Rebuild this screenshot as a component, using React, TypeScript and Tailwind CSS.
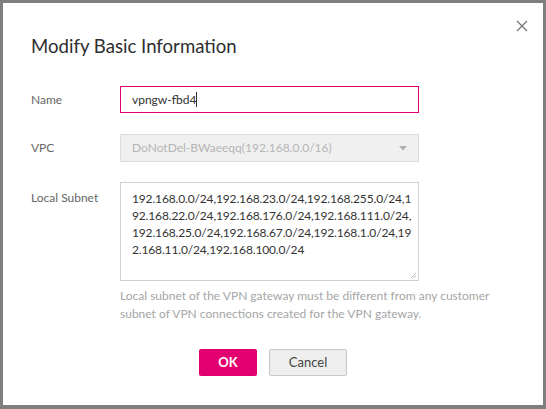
import React from "react";

export default function App() {
  return (
    <div className="w-[546px] h-[409px] bg-[#7f7f7f] pt-[3px] px-[3px] pb-[4px] font-['Lato',sans-serif]">
      <div className="relative h-full bg-white">
        <button className="absolute left-[513px] top-[17px] w-[12px] h-[12px] p-0">
          <svg width="12" height="12" viewBox="0 0 12 12">
            <path d="M1 1 L11 11 M11 1 L1 11" stroke="#777" strokeWidth="1.3" fill="none" />
          </svg>
        </button>
        <div className="pl-[28px]">
          <h2 className="pt-[31px] text-[18.6px] leading-[24px] text-[#2e2e2e]">Modify Basic Information</h2>
          <div className="mt-[28px] flex items-center h-[27px]">
            <div className="w-[89px] text-[12px] text-[#666]">Name</div>
            <div className="w-[299px] h-[27px] border border-[#e3006f] flex items-center pl-[11px] text-[12px] text-[#333]">
              vpngw-fbd4<span className="inline-block w-px h-[15px] bg-[#333]" />
            </div>
          </div>
          <div className="mt-[21px] flex items-center h-[28px]">
            <div className="w-[89px] text-[12px] text-[#666]">VPC</div>
            <div className="w-[299px] h-[28px] border border-[#dcdcdc] bg-[#f0f0f0] flex items-center justify-between pl-[11px] pr-[11px] text-[12px] text-[#b5b5b5]">
              <span>DoNotDel-BWaeeqq(192.168.0.0/16)</span>
              <svg width="8" height="5" viewBox="0 0 8 5">
                <path d="M0 0 L8 0 L4 4.5 Z" fill="#b0b0b0" />
              </svg>
            </div>
          </div>
          <div className="mt-[20px] flex items-start">
            <div className="w-[89px] pt-[7px] text-[12px] leading-[17px] text-[#666]">Local Subnet</div>
            <div className="relative w-[299px] h-[99px] border border-[#d0d0d0] pl-[11px] pt-[7px] text-[12px] leading-[17px] tracking-[-0.15px] text-[#333] whitespace-pre">
              <div>192.168.0.0/24,192.168.23.0/24,192.168.255.0/24,1</div>
              <div>92.168.22.0/24,192.168.176.0/24,192.168.111.0/24,</div>
              <div>192.168.25.0/24,192.168.67.0/24,192.168.1.0/24,19</div>
              <div>2.168.11.0/24,192.168.100.0/24</div>
              <svg className="absolute right-[2px] bottom-[2px]" width="6" height="6" viewBox="0 0 6 6">
                <path d="M6 1 L1 6 M6 3.5 L3.5 6" stroke="#b8b8b8" strokeWidth="1" />
              </svg>
            </div>
          </div>
          <div className="ml-[89px] mt-[6px] text-[12px] leading-[18px] text-[#a6a6a6]">
            <div>Local subnet of the VPN gateway must be different from any customer</div>
            <div>subnet of VPN connections created for the VPN gateway.</div>
          </div>
        </div>
        <div className="mt-[26px] flex justify-center gap-[12px]">
          <button className="w-[58px] h-[27px] bg-[#e3006f] text-white text-[13px] font-bold rounded-[2px]">OK</button>
          <button className="w-[78px] h-[27px] bg-[#eeeeee] border border-[#c8c8c8] text-[#444] text-[13px] rounded-[2px]">Cancel</button>
        </div>
      </div>
    </div>
  );
}
